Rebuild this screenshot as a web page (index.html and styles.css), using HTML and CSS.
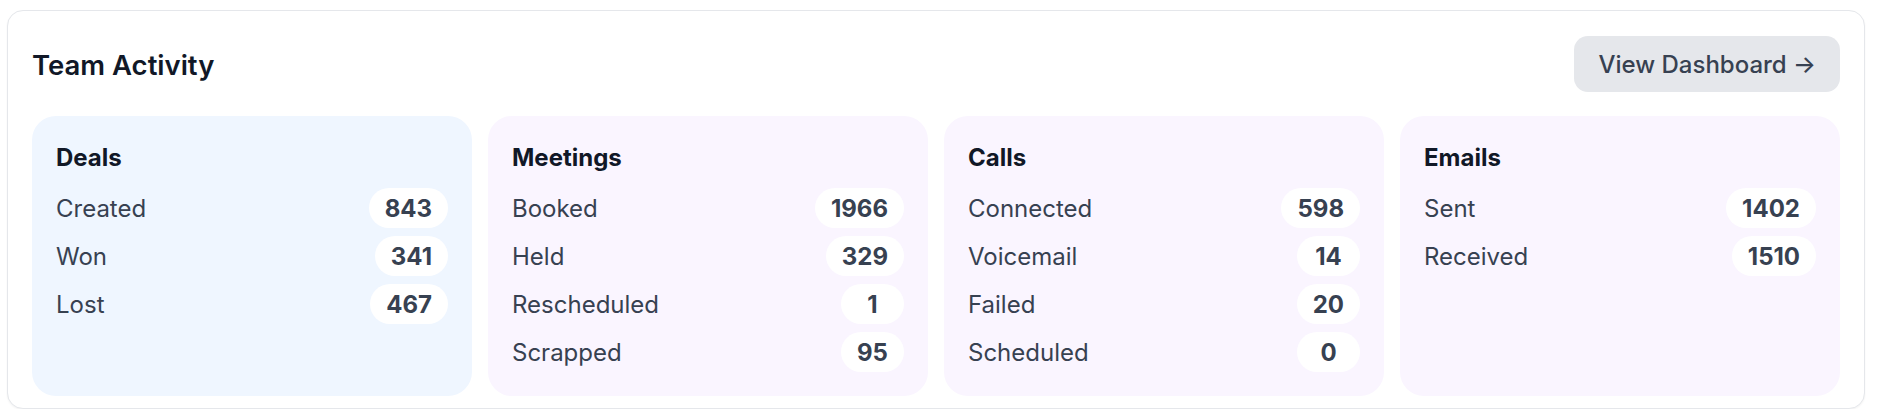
FILE: index.html
```html
<!DOCTYPE html>
<html lang="en">
<head>
<meta charset="utf-8">
<title>Team Activity</title>
<link rel="stylesheet" href="styles.css">
</head>
<body>
<section class="card">
  <header class="card-head">
    <h2 class="card-title">Team Activity</h2>
    <button class="btn">View Dashboard →</button>
  </header>
  <div class="groups">
    <div class="group group-blue">
      <h3 class="group-title">Deals</h3>
      <ul class="rows">
        <li class="row"><span class="label">Created</span><span class="pill">843</span></li>
        <li class="row"><span class="label">Won</span><span class="pill">341</span></li>
        <li class="row"><span class="label">Lost</span><span class="pill">467</span></li>
      </ul>
    </div>
    <div class="group group-purple">
      <h3 class="group-title">Meetings</h3>
      <ul class="rows">
        <li class="row"><span class="label">Booked</span><span class="pill">1966</span></li>
        <li class="row"><span class="label">Held</span><span class="pill">329</span></li>
        <li class="row"><span class="label">Rescheduled</span><span class="pill">1</span></li>
        <li class="row"><span class="label">Scrapped</span><span class="pill">95</span></li>
      </ul>
    </div>
    <div class="group group-purple">
      <h3 class="group-title">Calls</h3>
      <ul class="rows">
        <li class="row"><span class="label">Connected</span><span class="pill">598</span></li>
        <li class="row"><span class="label">Voicemail</span><span class="pill">14</span></li>
        <li class="row"><span class="label">Failed</span><span class="pill">20</span></li>
        <li class="row"><span class="label">Scheduled</span><span class="pill">0</span></li>
      </ul>
    </div>
    <div class="group group-purple">
      <h3 class="group-title">Emails</h3>
      <ul class="rows">
        <li class="row"><span class="label">Sent</span><span class="pill">1402</span></li>
        <li class="row"><span class="label">Received</span><span class="pill">1510</span></li>
      </ul>
    </div>
  </div>
</section>
</body>
</html>
```

FILE: styles.css
```css
* { box-sizing: border-box; }

html, body {
  background: #ffffff;
}

body {
  margin: 0;
  padding: 10px 15px 0 7px;
  font-family: Inter, "Noto Sans", "Liberation Sans", sans-serif;
  color: #111827;
}

.card {
  border: 1px solid #e5e7eb;
  border-radius: 16px;
  background: #ffffff;
  padding: 25px 24px 12px 24px;
  box-shadow: 0 1px 2px rgba(0, 0, 0, 0.05);
}

.card-head {
  display: flex;
  align-items: center;
  justify-content: space-between;
  margin-bottom: 24px;
}

.card-title {
  margin: 0;
  padding-top: 1px;
  font-size: 27.5px;
  font-weight: 600;
  color: #111827;
  line-height: 36px;
}

.btn {
  height: 56px;
  padding: 2px 24px 0 24px;
  border: 0;
  border-radius: 14px;
  background: #e5e7eb;
  color: #374151;
  font-family: inherit;
  font-size: 24px;
  font-weight: 500;
  line-height: 1;
}

.groups {
  display: grid;
  grid-template-columns: repeat(4, 1fr);
  gap: 16px;
}

.group {
  height: 280px;
  border-radius: 24px;
  padding: 24px;
}

.group-blue { background: #eff6ff; }
.group-purple { background: #faf5ff; }

.group-title {
  margin: 0 0 16px 0;
  padding-top: 2px;
  height: 32px;
  font-size: 24px;
  font-weight: 700;
  line-height: 32px;
  color: #111827;
}

.rows {
  list-style: none;
  margin: 0;
  padding: 0;
  display: flex;
  flex-direction: column;
  gap: 8px;
}

.row {
  display: flex;
  align-items: center;
  justify-content: space-between;
  height: 40px;
}

.label {
  padding-top: 1px;
  font-size: 24px;
  color: #374151;
}

.pill {
  display: inline-flex;
  align-items: center;
  justify-content: center;
  min-width: 63px;
  height: 40px;
  padding: 1px 16px 0 16px;
  border-radius: 999px;
  background: #ffffff;
  font-size: 24px;
  font-weight: 700;
  color: #374151;
}
```
